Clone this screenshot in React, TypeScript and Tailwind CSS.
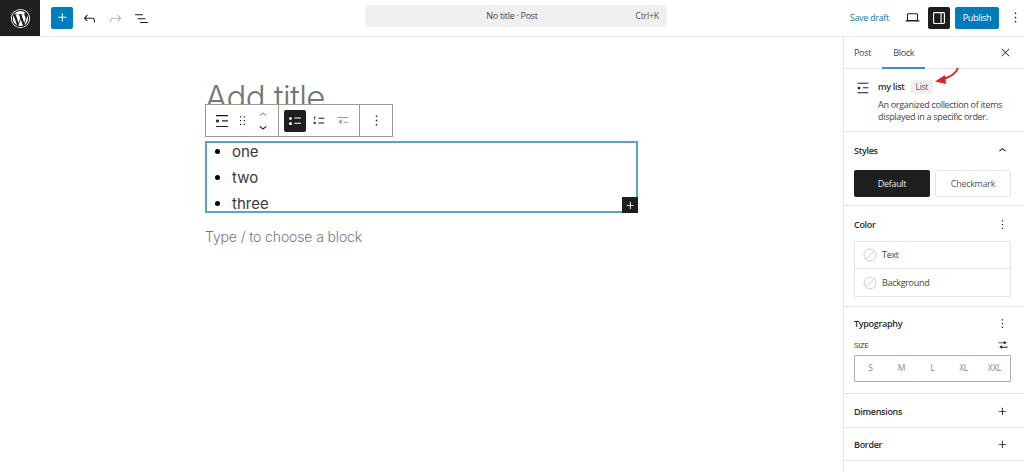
import React from "react";

const I = ({ d, size = 16, className = "" }: { d: string; size?: number; className?: string }) => (
  <svg viewBox="0 0 24 24" width={size} height={size} fill="currentColor" className={className}>
    <path d={d} />
  </svg>
);

const P = {
  plus: "M11 12.5V17.5H12.5V12.5H17.5V11H12.5V6H11V11H6V12.5H11Z",
  undo: "M18.3 11.7c-.6-.6-1.4-.9-2.3-.9H6.7l2.9-3.3-1.1-1-4.5 5L8.5 16l1-1-2.7-2.7H16c.5 0 .9.2 1.3.5 1 1 1 3.4 1 4.5v.3h1.5v-.2c0-1.5 0-4.3-1.500-5.700z",
  redo: "M15.6 6.5l-1.1 1 2.9 3.3H8c-.9 0-1.7.3-2.3.9-1.4 1.5-1.4 4.2-1.4 5.6v.2h1.5v-.3c0-1.1 0-3.5 1-4.5.3-.3.7-.5 1.3-.5h9.2L14.5 15l1.1 1.1 4.6-4.6-4.6-5z",
  listView: "M3 6h11v1.5H3V6Zm3.5 5.5h11V13h-11v-1.5ZM21 17H10v1.5h11V17Z",
  more: "M13 19h-2v-2h2v2zm0-6h-2v-2h2v2zm0-6h-2V5h2v2z",
  desktop: "M20.5 16h-.7V8c0-1.1-.9-2-2-2H6.2c-1.1 0-2 .9-2 2v8h-.7c-.8 0-1.5.7-1.5 1.5h20c0-.8-.7-1.500-1.500-1.500zM5.700 8c0-.3.2-.5.5-.5h11.600c.3 0 .5.2.5.5v7.600H5.700V8z",
  drawer: "M18 4H6c-1.1 0-2 .9-2 2v12c0 1.1.9 2 2 2h12c1.1 0 2-.9 2-2V6c0-1.1-.9-2-2-2zm-4 14.5H6c-.3 0-.5-.2-.5-.5V6c0-.3.2-.5.5-.5h8v13zm4.5-.5c0 .3-.2.5-.5.5h-2.5v-13H18c.3 0 .5.2.5.5v12z",
  close: "m13.06 12 6.47-6.47-1.06-1.06L12 10.94 5.53 4.47 4.47 5.53 10.94 12l-6.47 6.47 1.06 1.06L12 13.06l6.47 6.47 1.06-1.06L13.06 12Z",
  list: "M4 4v1.5h16V4H4zm8 8.5h8V11h-8v1.5zM4 20h16v-1.5H4V20zm4-8c0-1.1-.9-2-2-2s-2 .9-2 2 .9 2 2 2 2-.9 2-2z",
  drag: "M8 7h2V5H8v2zm0 6h2v-2H8v2zm0 6h2v-2H8v2zm6-14v2h2V5h-2zm0 8h2v-2h-2v2zm0 6h2v-2h-2v2z",
  up: "M6.5 12.4L12 8l5.5 4.4-.9 1.2L12 10l-4.5 3.6-1-1.2z",
  down: "M17.5 11.6L12 16l-5.5-4.4.9-1.2L12 14l4.5-3.6 1 1.2z",
  bullets: "M11.1 15.8H20v-1.5h-8.9v1.5zm0-8.600v1.500H20V7.200h-8.900zM6 10.500c1.100 0 2-.7 2-1.800s-.9-1.800-2-1.800-2 .7-2 1.800.9 1.800 2 1.800zm0 6.800c1.100 0 2-.7 2-1.800s-.9-1.800-2-1.800-2 .7-2 1.800.9 1.800 2 1.800z",
  numbered: "M11.1 15.8H20v-1.5h-8.9v1.5zm0-8.6v1.5H20V7.2h-8.9zM5 6.700V10h1.300V5.300L4 6l.4 1 .6-.300zM4 14.500h1.800v.5H4v1.500h3V13H4v1.500z",
  outdent: "M4 6h16v1.500H4V6zm9 7h7v1.500h-7V13zM9.500 9.500l1 1L8.500 12.500H11V14H8.500l2 2-1 1L5 13.250l4.500-3.750z",
  sliders: "M4 7.500h9.500V5l5 3-5 3V9H4V7.500zM20 15H10.500v-2.500l-5 3 5 3v-2H20V15z",
};

const Section = ({ title, children, icon, className = "" }: { title: string; children?: React.ReactNode; icon?: string; className?: string }) => (
  <section className={`border-b border-[#e4e4e4] pl-[10px] pr-[13px] ${className}`}>
    <div className="flex items-center justify-between">
      <h2 className="text-[9px] leading-[14px] font-semibold tracking-[-0.3px] text-[#2a2a2a]">{title}</h2>
      {icon && <I d={icon} size={15} className="text-[#1e1e1e] mr-[1px]" />}
    </div>
    {children}
  </section>
);

const ColorRow = ({ label, last }: { label: string; last?: boolean }) => (
  <div className={`flex items-center h-[27px] pl-[8px] gap-[5px] ${last ? "" : "border-b border-[#e4e4e4]"}`}>
    <svg width="14" height="14" viewBox="0 0 14 14" fill="none" stroke="#d0d0d0" strokeWidth="1">
      <circle cx="7" cy="7" r="6" />
      <path d="M2.800 11.200 11.200 2.800" />
    </svg>
    <span className="text-[9px] text-[#444]">{label}</span>
  </div>
);

const TB = ({ d, className = "text-[#1e1e1e]", size = 18, w = "w-[21px]" }: { d: string; className?: string; size?: number; w?: string }) => (
  <span className={`${w} flex items-center justify-center ${className}`}>
    <I d={d} size={size} />
  </span>
);

export default function App() {
  return (
    <div
      className="w-[1024px] h-[472px] overflow-hidden bg-white flex flex-col text-[#1e1e1e] tracking-[-0.3px]"
      style={{ fontFamily: '"Open Sans", "Noto Sans", sans-serif' }}
    >
      <header className="h-[37px] shrink-0 border-b border-[#ececec] flex items-center relative">
        <div className="w-[40px] h-[36px] bg-[#1e1e1e] flex items-center justify-center self-start">
          <svg viewBox="0 0 24 24" width="21" height="21" fill="#fff">
            <path fillRule="evenodd" d="M12 1a11 11 0 1 0 0 22 11 11 0 0 0 0-22Zm0 1a10 10 0 1 1 0 20 10 10 0 0 1 0-20ZM3.300 12a8.700 8.700 0 0 0 4.900 7.800L4 8.500A8.700 8.700 0 0 0 3.300 12Zm14.500-.4c0-1.100-.4-1.800-.7-2.400-.4-.7-.8-1.300-.8-2 0-.8.6-1.500 1.400-1.500h.1A8.700 8.700 0 0 0 4.700 7.200h.6c.9 0 2.300-.1 2.300-.1.5 0 .5.700.1.700 0 0-.5.100-1 .100l3.100 9.300 1.900-5.600-1.300-3.700c-.5 0-.9-.1-.9-.1-.5 0-.4-.8 0-.7 0 0 1.400.1 2.300.1.900 0 2.300-.1 2.300-.1.500 0 .5.700.1.700 0 0-.5.100-1 .100l3.100 9.200.9-2.800c.4-1.200.6-2 .6-2.800Zm-5.600 1.200-2.600 7.500a8.700 8.700 0 0 0 5.300-.1l-.1-.1-2.600-7.300Zm7.400-4.900.1.900c0 .9-.2 1.900-.7 3.100l-2.700 7.700a8.700 8.700 0 0 0 3.300-11.700Z" />
          </svg>
        </div>
        <div className="ml-[11px] w-[22px] h-[22px] bg-[#007cba] rounded-[2px] flex items-center justify-center text-white mb-px">
          <I d={P.plus} size={17} />
        </div>
        <I d={P.undo} size={17} className="ml-[8px] text-[#1e1e1e]" />
        <I d={P.redo} size={17} className="ml-[9px] text-[#b5b5b5]" />
        <I d={P.listView} size={17} className="ml-[9px] text-[#1e1e1e]" />

        <div className="absolute left-[365px] top-[5px] w-[302px] h-[22px] bg-[#f0f0f0] rounded-[2px] flex items-center justify-center pr-[8px] text-[9px] text-[#444]">
          No title · Post
          <span className="absolute right-[8px] text-[#555]">Ctrl+K</span>
        </div>

        <div className="ml-auto flex items-center mb-px">
          <span className="text-[9px] text-[#0b7bb0] mr-[15px]">Save draft</span>
          <I d={P.desktop} size={17} className="mr-[7px]" />
          <span className="w-[22px] h-[22px] bg-[#1e1e1e] text-white rounded-[2px] flex items-center justify-center mr-[5px]">
            <I d={P.drawer} size={18} />
          </span>
          <span className="w-[44px] h-[22px] bg-[#007cba] text-white rounded-[2px] text-[9px] flex items-center justify-center mr-[8px]">
            Publish
          </span>
          <I d={P.more} size={17} />
        </div>
      </header>

      <div className="flex flex-1 min-h-0">
        <main className="flex-1 relative pl-[205px]" style={{ fontFamily: "Inter, sans-serif" }}>
          <div className="w-[433px]">
            <h1 className="text-[33px] leading-[40px] pt-[40px] font-light tracking-[-0.6px] text-[#757575] h-[104px] overflow-hidden">
              Add title
            </h1>
            <ul className="h-[72px] border-2 border-[#5fa3c4] overflow-hidden pl-[25px] list-disc text-[15px] leading-[26px] tracking-normal text-[#3a3a3a] marker:text-black">
              <li className="-mt-[4px]">one</li>
              <li>two</li>
              <li>three</li>
            </ul>
            <p className="mt-[12px] text-[14px] leading-[24px] font-light tracking-[-0.13px] text-[#777]">
              Type / to choose a block
            </p>
          </div>

          <div className="absolute left-[205px] top-[67px] w-[188px] h-[33px] bg-white border border-[#999] flex items-stretch">
            <div className="flex items-center pl-[5px] w-[73px] border-r border-[#999]">
              <TB d={P.list} />
              <TB d={P.drag} size={15} />
              <div className="w-[19px] flex flex-col items-center">
                <I d={P.up} size={16} className="text-[#999] -mb-[2px]" />
                <I d={P.down} size={16} className="text-[#1e1e1e] -mt-[2px]" />
              </div>
            </div>
            <div className="flex items-center pl-[5px] w-[81px] border-r border-[#999]">
              <span className="w-[22px] h-[22px] bg-[#1e1e1e] text-white rounded-[2px] flex items-center justify-center">
                <I d={P.bullets} size={18} />
              </span>
              <TB d={P.numbered} size={16} w="w-[26px]" />
              <TB d={P.outdent} size={16} w="w-[22px]" className="text-[#999]" />
            </div>
            <div className="flex-1 flex items-center justify-center">
              <I d={P.more} size={17} />
            </div>
          </div>

          <span className="absolute left-[622px] top-[160px] w-[16px] h-[16px] bg-[#1e1e1e] text-white flex items-center justify-center">
            <I d={P.plus} size={15} />
          </span>
        </main>

        <aside className="w-[181px] shrink-0 border-l border-[#e4e4e4] relative">
          <div className="h-[32px] flex items-stretch border-b border-[#e4e4e4] text-[9px] text-[#444] pl-[10px] relative">
            <span className="flex items-center mr-[11px]">Post</span>
            <span className="flex items-center px-[11px] pt-[2px] border-b-2 border-[#3f8fb3] -mb-px">Block</span>
            <I d={P.close} size={13} className="absolute right-[12px] top-[9px] text-[#1e1e1e]" />
          </div>

          <div className="h-[63px] border-b border-[#e4e4e4] flex pl-[11px] pt-[10px]">
            <I d={P.list} size={16} className="mr-[7px] mt-[1px] shrink-0" />
            <div>
              <div className="flex items-center h-[16px]">
                <span className="text-[9px] font-semibold text-[#333]">my list</span>
                <span className="ml-[6px] px-[5px] h-[14px] bg-[#f0f0f0] rounded-[2px] text-[8.500px] leading-[14px] text-[#555]">List</span>
              </div>
              <p className="text-[9px] leading-[12px] text-[#444] mt-[4px] whitespace-nowrap">
                An organized collection of items<br />displayed in a specific order.
              </p>
            </div>
          </div>

          <svg className="absolute left-[91px] top-[30px]" width="24" height="18" viewBox="0 0 24 18" fill="none">
            <path d="M23 1 C21 6 16 10 8 12" stroke="#d8232a" strokeWidth="2" />
            <path d="M0 14.500 10 8 11 17Z" fill="#d8232a" />
          </svg>

          <Section title="Styles" icon={P.up} className="h-[74px] pt-[11px]">
            <div className="grid grid-cols-2 gap-[5px] mt-[12px]">
              <div className="h-[27px] bg-[#1e1e1e] rounded-[2px] text-[9px] text-[#e8e8e8] flex items-center justify-center">Default</div>
              <div className="h-[27px] border border-[#e4e4e4] rounded-[2px] text-[9px] text-[#555] flex items-center justify-center">Checkmark</div>
            </div>
          </Section>

          <Section title="Color" icon={P.more} className="h-[101px] pt-[11px]">
            <div className="mt-[9px] border border-[#e4e4e4] rounded-[1px]">
              <ColorRow label="Text" />
              <ColorRow label="Background" last />
            </div>
          </Section>

          <Section title="Typography" icon={P.more} className="h-[87px] pt-[9px]">
            <div className="flex items-center justify-between mt-[7px] h-[14px]">
              <span className="text-[8px] font-medium text-[#333]">SIZE</span>
              <I d={P.sliders} size={14} className="mr-[1px]" />
            </div>
            <div className="mt-[3px] h-[27px] border border-[#b0b0b0] rounded-[1px] grid grid-cols-5 text-[8.500px] text-[#8a8a8a] text-center items-center">
              <span>S</span>
              <span>M</span>
              <span>L</span>
              <span>XL</span>
              <span>XXL</span>
            </div>
          </Section>

          <Section title="Dimensions" icon={P.plus} className="h-[34px] pt-[10px]" />
          <Section title="Border" icon={P.plus} className="h-[33px] pt-[9px]" />
        </aside>
      </div>
    </div>
  );
}
